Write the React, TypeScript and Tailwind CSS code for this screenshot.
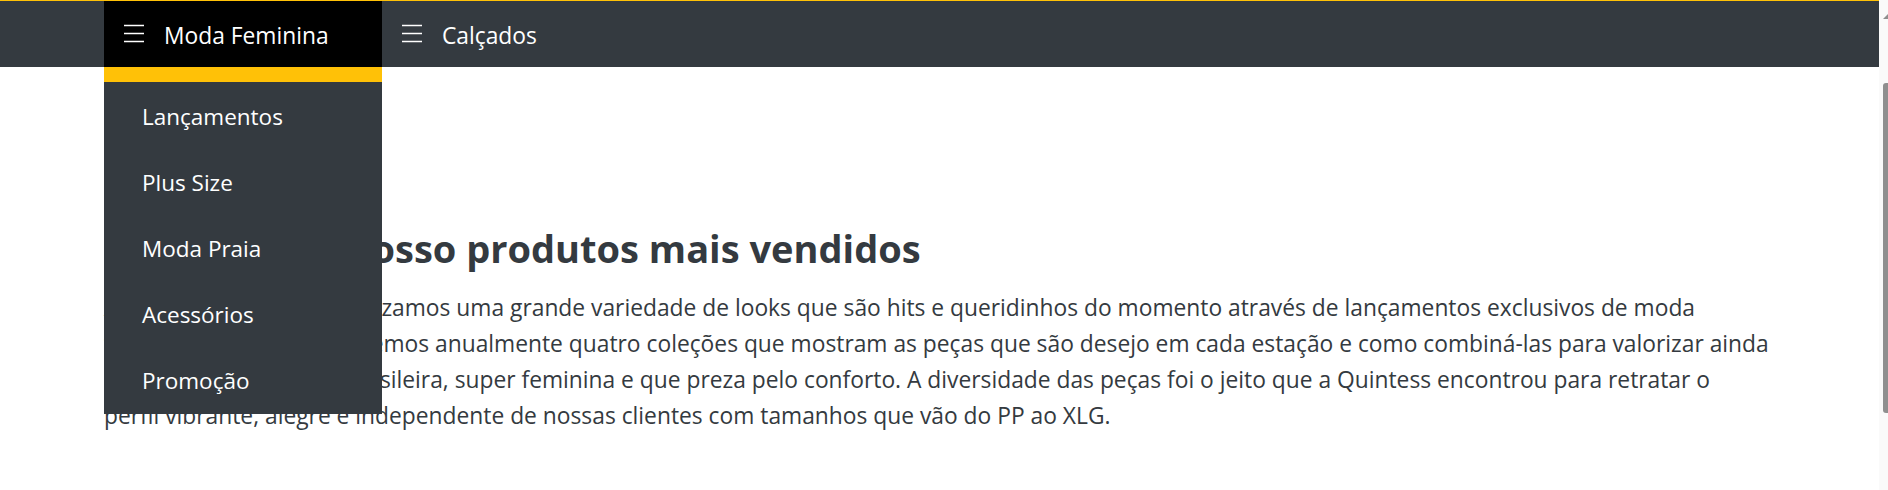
import type { ReactNode } from 'react'

const MENU = ['Lançamentos', 'Plus Size', 'Moda Praia', 'Acessórios', 'Promoção']

function Burger() {
  return (
    <svg width="20" height="20" viewBox="0 0 20 20" className="shrink-0">
      <path d="M0 1.5h20M0 9.5h20M0 17.5h20" stroke="#fff" strokeWidth="1.6" />
    </svg>
  )
}

function NavItem({ label, active, children }: { label: string; active?: boolean; children?: ReactNode }) {
  return (
    <div className={`relative flex h-full items-center gap-5 pl-5 ${active ? 'w-[278px] bg-black' : 'pr-5'}`}>
      <Burger />
      <span className="translate-y-[2px] text-[22.8px] text-white">{label}</span>
      {children}
    </div>
  )
}

function App() {
  return (
    <div className="flex h-[490px] w-[1888px] overflow-hidden bg-white" style={{ fontFamily: '"Open Sans", "Noto Sans", sans-serif' }}>
      <div className="flex-1">
        <nav className="h-[67px] border-t border-[#ffc107] bg-[#343a40]">
          <div className="mx-auto flex h-full w-[1671px]">
            <NavItem label="Moda Feminina" active>
              <div className="absolute left-0 top-full z-10 w-[278px]">
                <div className="h-[15px] bg-[#ffc107]" />
                <ul className="bg-[#343a40] pt-[2px]">
                  {MENU.map((item) => (
                    <li key={item} className="flex h-[66px] items-center pl-[38px] text-[22.5px] text-white">
                      {item}
                    </li>
                  ))}
                </ul>
              </div>
            </NavItem>
            <NavItem label="Calçados" />
          </div>
        </nav>

        <main className="mx-auto w-[1671px] pt-[158px] text-[#343a40]">
          <h2 className="text-[38px] font-bold leading-[46px]">Confira aqui nosso produtos mais vendidos</h2>
          <p className="mt-[19px] whitespace-nowrap text-[22.8px] leading-[36px]">
            Aqui na Quintess nós realizamos uma grande variedade de looks que são hits e queridinhos do momento através de lançamentos exclusivos de moda
            <br />
            feminina onde desenvolvemos anualmente quatro coleções que mostram as peças que são desejo em cada estação e como combiná-las para valorizar ainda
            <br />
            mais a vida da mulher brasileira, super feminina e que preza pelo conforto. A diversidade das peças foi o jeito que a Quintess encontrou para retratar o
            <br />
            perfil vibrante, alegre e independente de nossas clientes com tamanhos que vão do PP ao XLG.
          </p>
        </main>
      </div>

      {/* fake scrollbar */}
      <div className="relative w-[9px] shrink-0 bg-[#fafafa]">
        <div className="ml-auto mt-[14px] h-0 w-0 border-b-[5px] border-l-[5px] border-b-[#8f8f8f] border-l-transparent" />
        <div className="ml-auto mt-[64px] h-[330px] w-[5px] rounded-l-[3px] bg-[#8f8f8f]" />
      </div>
    </div>
  )
}

export default App
